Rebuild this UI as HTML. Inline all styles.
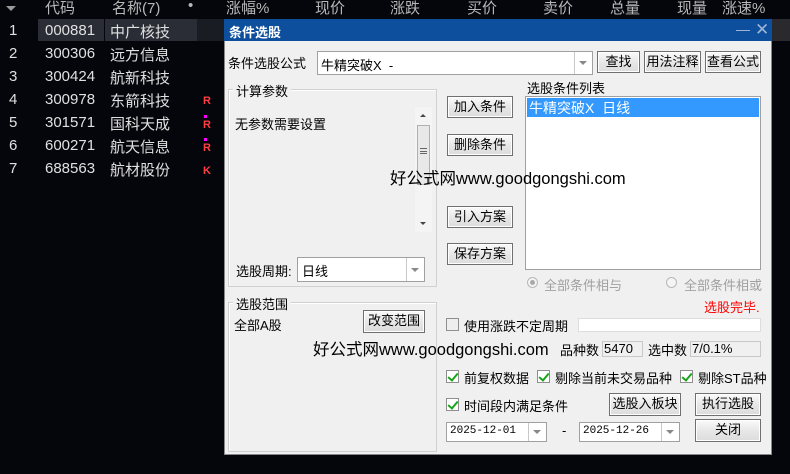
<!DOCTYPE html>
<html><head><meta charset="utf-8"><style>
*{margin:0;padding:0;box-sizing:border-box}
body{width:790px;height:474px;background:#05050c;position:relative;overflow:hidden;font-family:"Liberation Sans","Noto Sans CJK SC",sans-serif;}
.a{position:absolute;white-space:nowrap}
.h{color:#b8b8b8;font-size:15px;top:-3px}
.r{color:#e0e0e0;font-size:15px}
.d{font-size:13px;color:#000}
.btn{position:absolute;border:1px solid #707070;background:linear-gradient(#fafafa,#e6e6e6 55%,#dcdcdc);font-size:13px;text-align:center;line-height:20px;color:#000;box-shadow:inset 0 0 0 1px #fff}
.box{position:absolute;background:#fff;border:1px solid #a0a0a0}
.grp{position:absolute;border:1px solid #d0d0d0;box-shadow:inset 1px 1px 0 #fff}
.cb{position:absolute;width:13px;height:13px;border:1px solid #8f8f8f;background:#fff}
.cb.k::after{content:"";position:absolute;left:3px;top:0px;width:4px;height:8px;border:solid #1aa31a;border-width:0 2px 2px 0;transform:rotate(40deg)}
.arr{position:absolute;width:0;height:0;border-left:4px solid transparent;border-right:4px solid transparent;border-top:4px solid #888}
.mono{font-family:'Liberation Mono',monospace;font-size:11px}
</style></head><body>
<div class="a" style="left:0;top:0;width:790px;height:18px;background:#05050c"></div>
<div class="arr" style="left:6px;top:6px;border-top-color:#9a9a9a;border-left-width:5px;border-right-width:5px;border-top-width:5px"></div>
<div class="a h" style="left:45px">代码</div>
<div class="a h" style="left:112px">名称(7)</div>
<div class="a h" style="left:188px">•</div>
<div class="a h" style="left:226px">涨幅%</div>
<div class="a h" style="left:315px">现价</div>
<div class="a h" style="left:390px">涨跌</div>
<div class="a h" style="left:467px">买价</div>
<div class="a h" style="left:543px">卖价</div>
<div class="a h" style="left:610px">总量</div>
<div class="a h" style="left:677px">现量</div>
<div class="a h" style="left:722px">涨速%</div>
<div class="a" style="left:38px;top:19px;width:66px;height:22px;background:#2a2d36"></div>
<div class="a" style="left:105px;top:19px;width:92px;height:22px;background:#2a2d36"></div>
<div class="a" style="left:197px;top:19px;width:27px;height:22px;background:#1a1c24"></div>
<div class="a r" style="left:9px;top:22px">1</div><div class="a r" style="left:45px;top:22px">000881</div><div class="a r" style="left:110px;top:21px">中广核技</div>
<div class="a r" style="left:9px;top:45px">2</div><div class="a r" style="left:45px;top:45px">300306</div><div class="a r" style="left:110px;top:44px">远方信息</div>
<div class="a r" style="left:9px;top:68px">3</div><div class="a r" style="left:45px;top:68px">300424</div><div class="a r" style="left:110px;top:67px">航新科技</div>
<div class="a r" style="left:9px;top:91px">4</div><div class="a r" style="left:45px;top:91px">300978</div><div class="a r" style="left:110px;top:90px">东箭科技</div>
<div class="a r" style="left:9px;top:114px">5</div><div class="a r" style="left:45px;top:114px">301571</div><div class="a r" style="left:110px;top:113px">国科天成</div>
<div class="a r" style="left:9px;top:137px">6</div><div class="a r" style="left:45px;top:137px">600271</div><div class="a r" style="left:110px;top:136px">航天信息</div>
<div class="a r" style="left:9px;top:160px">7</div><div class="a r" style="left:45px;top:160px">688563</div><div class="a r" style="left:110px;top:159px">航材股份</div>
<div class="a" style="left:203px;top:95px;color:#ff4040;font-size:11px;font-weight:bold">R</div>
<div class="a" style="left:204px;top:115px;width:3px;height:3px;background:#f0f"></div>
<div class="a" style="left:203px;top:119px;color:#ff4040;font-size:11px;font-weight:bold">R</div>
<div class="a" style="left:204px;top:138px;width:3px;height:3px;background:#f0f"></div>
<div class="a" style="left:203px;top:142px;color:#ff4040;font-size:11px;font-weight:bold">R</div>
<div class="a" style="left:203px;top:165px;color:#ff4040;font-size:11px;font-weight:bold">K</div>
<div class="a" style="left:772px;top:19px;width:18px;height:22px;background:#2a2a2e"></div>
<!-- dialog -->
<div class="a" style="left:224px;top:19px;width:548px;height:436px;background:#f0f0f0;border:1px solid #888"></div>
<div class="a" style="left:224px;top:19px;width:548px;height:22px;background:#0e4f9d"></div>
<div class="a" style="left:229px;top:22px;color:#fff;font-size:13px;font-weight:bold">条件选股</div>
<div class="a" style="left:736px;top:30px;width:14px;height:1px;background:#9fb5d5"></div>
<div class="a" style="left:755px;top:20px;color:#9fb5d5;font-size:17px">✕</div>

<div class="a d" style="left:228px;top:53px">条件选股公式</div>
<div class="box" style="left:317px;top:51px;width:276px;height:24px"></div>
<div class="a d" style="left:321px;top:55px">牛精突破X &nbsp;-</div>
<div class="a" style="left:574px;top:52px;width:1px;height:22px;background:#c8c8c8"></div>
<div class="arr" style="left:579px;top:61px"></div>
<div class="btn" style="left:597px;top:51px;width:43px;height:22px">查找</div>
<div class="btn" style="left:644px;top:51px;width:57px;height:22px">用法注释</div>
<div class="btn" style="left:705px;top:51px;width:56px;height:22px">查看公式</div>

<div class="grp" style="left:228px;top:89px;width:209px;height:198px"></div>
<div class="a d" style="left:233px;top:81px;background:#f0f0f0;padding:0 3px">计算参数</div>
<div class="a d" style="left:235px;top:114px">无参数需要设置</div>
<div class="a" style="left:415px;top:107px;width:17px;height:125px;background:#f4f4f4"></div>
<div class="a" style="left:417px;top:125px;width:13px;height:60px;background:#e8e8e8;border:1px solid #b0b0b0"></div>
<div class="a" style="left:420px;top:148px;width:7px;height:6px;border-top:1px solid #666;border-bottom:1px solid #666"></div>
<div class="a" style="left:420px;top:151px;width:7px;height:1px;background:#666"></div>
<div class="a" style="left:420px;top:114px;border-left:3px solid transparent;border-right:3px solid transparent;border-bottom:3px solid #444;width:0"></div>
<div class="a" style="left:420px;top:222px;border-left:3px solid transparent;border-right:3px solid transparent;border-top:3px solid #444;width:0"></div>
<div class="a d" style="left:236px;top:261px">选股周期:</div>
<div class="box" style="left:297px;top:257px;width:128px;height:25px"></div>
<div class="a d" style="left:302px;top:261px">日线</div>
<div class="a" style="left:406px;top:258px;width:1px;height:23px;background:#c8c8c8"></div>
<div class="arr" style="left:411px;top:268px"></div>

<div class="btn" style="left:447px;top:96px;width:66px;height:22px">加入条件</div>
<div class="btn" style="left:447px;top:134px;width:66px;height:22px">删除条件</div>
<div class="btn" style="left:447px;top:206px;width:66px;height:22px">引入方案</div>
<div class="btn" style="left:447px;top:243px;width:66px;height:22px">保存方案</div>

<div class="a d" style="left:527px;top:78px">选股条件列表</div>
<div class="box" style="left:525px;top:96px;width:236px;height:174px"></div>
<div class="a" style="left:527px;top:98px;width:232px;height:19px;background:#3399ff"></div>
<div class="a" style="left:529px;top:98px;color:#fff;font-size:14px">牛精突破X &nbsp;日线</div>

<div class="a" style="left:527px;top:277px;width:11px;height:11px;border-radius:50%;border:1px solid #b8b8b8;background:#f4f4f4"></div>
<div class="a" style="left:530px;top:280px;width:5px;height:5px;border-radius:50%;background:#aaa"></div>
<div class="a d" style="left:544px;top:275px;color:#a0a0a0">全部条件相与</div>
<div class="a" style="left:666px;top:277px;width:11px;height:11px;border-radius:50%;border:1px solid #b8b8b8;background:#f4f4f4"></div>
<div class="a d" style="left:684px;top:275px;color:#a0a0a0">全部条件相或</div>
<div class="a d" style="left:704px;top:297px;color:#f00">选股完毕.</div>

<div class="grp" style="left:228px;top:302px;width:209px;height:150px"></div>
<div class="a d" style="left:233px;top:294px;background:#f0f0f0;padding:0 3px">选股范围</div>
<div class="a d" style="left:234px;top:315px">全部A股</div>
<div class="btn" style="left:363px;top:310px;width:62px;height:23px">改变范围</div>

<div class="cb" style="left:446px;top:318px;background:#eee"></div>
<div class="a d" style="left:464px;top:316px">使用涨跌不定周期</div>
<div class="a" style="left:578px;top:318px;width:183px;height:14px;background:#fff;border:1px solid #ddd"></div>

<div class="a" style="left:560px;top:340px;font-size:13px">品种数</div>
<div class="a" style="left:602px;top:341px;width:41px;height:16px;border:1px solid #c8c8c8;background:#f0f0f0"></div>
<div class="a d" style="left:604px;top:341px">5470</div>
<div class="a d" style="left:648px;top:340px">选中数</div>
<div class="a" style="left:690px;top:341px;width:71px;height:16px;border:1px solid #c8c8c8;background:#f0f0f0"></div>
<div class="a d" style="left:692px;top:341px">7/0.1%</div>

<div class="a" style="left:390px;top:165px;font-size:16.5px;color:#000">好公式网www.goodgongshi.com</div>
<div class="a" style="left:313px;top:336px;font-size:16.5px;color:#000">好公式网www.goodgongshi.com</div>

<div class="cb k" style="left:446px;top:370px"></div><div class="a d" style="left:464px;top:368px">前复权数据</div>
<div class="cb k" style="left:537px;top:370px"></div><div class="a d" style="left:555px;top:368px">剔除当前未交易品种</div>
<div class="cb k" style="left:680px;top:370px"></div><div class="a d" style="left:698px;top:368px">剔除ST品种</div>
<div class="cb k" style="left:446px;top:398px"></div><div class="a d" style="left:464px;top:396px">时间段内满足条件</div>
<div class="btn" style="left:609px;top:393px;width:72px;height:23px">选股入板块</div>
<div class="btn" style="left:695px;top:393px;width:66px;height:23px">执行选股</div>

<div class="box" style="left:446px;top:422px;width:101px;height:20px"></div>
<div class="a mono" style="left:450px;top:425px">2025-12-01</div>
<div class="a" style="left:528px;top:423px;width:1px;height:18px;background:#c8c8c8"></div>
<div class="arr" style="left:533px;top:430px"></div>
<div class="a d" style="left:562px;top:423px">-</div>
<div class="box" style="left:579px;top:422px;width:101px;height:20px"></div>
<div class="a mono" style="left:583px;top:425px">2025-12-26</div>
<div class="a" style="left:661px;top:423px;width:1px;height:18px;background:#c8c8c8"></div>
<div class="arr" style="left:666px;top:430px"></div>
<div class="btn" style="left:695px;top:419px;width:66px;height:23px">关闭</div>
</body></html>
